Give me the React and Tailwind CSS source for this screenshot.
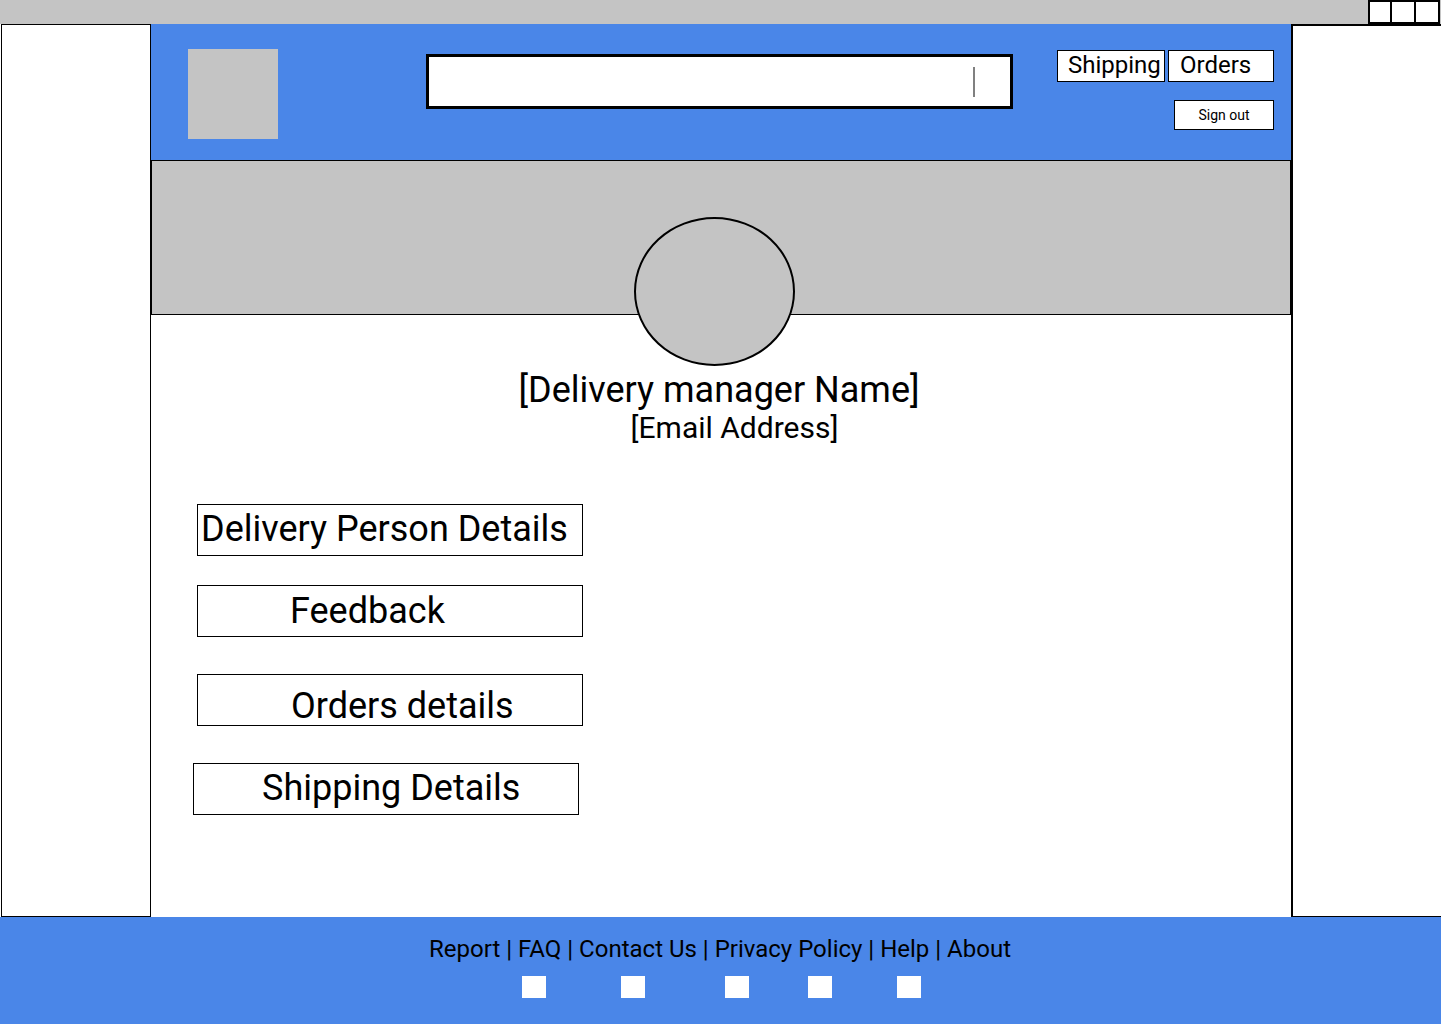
import React from "react";

export default function App() {
  return (
    <div className="w-[1441px] h-[1024px] flex flex-col bg-white text-black overflow-hidden font-['Roboto',sans-serif]">
      {/* top bar */}
      <div className="h-[24px] bg-[#c4c4c4] flex justify-end pr-[1px] shrink-0">
        <div className="w-[24px] h-[24px] bg-white border-2 border-black" />
        <div className="w-[24px] h-[24px] bg-white border-2 border-l-0 border-black" />
        <div className="w-[24px] h-[24px] bg-white border-2 border-l-0 border-black" />
      </div>

      {/* middle */}
      <div className="h-[893px] flex shrink-0">
        <div className="ml-[1px] w-[150px] h-full bg-white border border-black" />

        <div className="relative w-[1140px] h-full flex flex-col">
          {/* header */}
          <div className="h-[136px] bg-[#4a86e8] flex items-start shrink-0">
            <div className="ml-[37px] mt-[25px] w-[90px] h-[90px] bg-[#c4c4c4]" />
            <div className="ml-[148px] mt-[30px] w-[587px] h-[55px] bg-white border-[3px] border-black flex items-center justify-end pr-[35px]">
              <div className="w-[2px] h-[30px] bg-[#808080]" />
            </div>
            <div className="ml-[44px] mt-[26px] flex flex-col items-end">
              <div className="flex gap-[3px]">
                <div className="w-[108px] h-[32px] bg-white border border-black pl-[10px] text-[24px] leading-[28px] whitespace-nowrap">
                  Shipping
                </div>
                <div className="w-[106px] h-[32px] bg-white border border-black pl-[11px] text-[24px] leading-[28px] whitespace-nowrap">
                  Orders
                </div>
              </div>
              <div className="mt-[18px] w-[100px] h-[30px] bg-white border border-black flex items-center justify-center text-[14px] leading-none">
                Sign out
              </div>
            </div>
          </div>

          {/* banner */}
          <div className="h-[155px] bg-[#c4c4c4] border border-black shrink-0" />

          {/* content */}
          <div className="flex-1 flex flex-col bg-white">
            <div className="mt-[57px] w-full text-center pr-[4px] text-[36px] leading-[36px] whitespace-nowrap">
              [Delivery manager Name]
            </div>
            <div className="mt-[5px] w-full text-center pl-[27px] text-[30px] leading-[30px] whitespace-nowrap">
              [Email Address]
            </div>

            <div className="mt-[61px] flex flex-col items-start">
              <div className="ml-[46px] w-[386px] h-[52px] border border-black pl-[3px] pt-[3px] text-[36px] leading-[42px] whitespace-nowrap">
                Delivery Person Details
              </div>
              <div className="ml-[46px] mt-[29px] w-[386px] h-[52px] border border-black pl-[92px] pt-[4px] text-[36px] leading-[42px] whitespace-nowrap">
                Feedback
              </div>
              <div className="ml-[46px] mt-[37px] w-[386px] h-[52px] border border-black pl-[93px] pt-[10px] text-[36px] leading-[42px] whitespace-nowrap">
                Orders details
              </div>
              <div className="ml-[42px] mt-[37px] w-[386px] h-[52px] border border-black pl-[68px] pt-[3px] text-[36px] leading-[42px] whitespace-nowrap">
                Shipping Details
              </div>
            </div>
          </div>

          {/* avatar overlay */}
          <div className="absolute left-[483px] top-[193px] w-[161px] h-[149px] rounded-[50%] bg-[#c4c4c4] border-2 border-black" />
        </div>

        <div className="flex-1 h-full bg-white border-l-2 border-t-2 border-b border-black" />
      </div>

      {/* footer */}
      <div className="flex-1 bg-[#4a86e8] flex flex-col items-center">
        <div className="mt-[18px] text-[24px] leading-[28px] whitespace-nowrap pr-[1px]">
          Report | FAQ | Contact Us | Privacy Policy | Help | About
        </div>
        <div className="mt-[13px] flex pl-[2px]">
          <div className="w-[24px] h-[22px] bg-white" />
          <div className="ml-[75px] w-[24px] h-[22px] bg-white" />
          <div className="ml-[80px] w-[24px] h-[22px] bg-white" />
          <div className="ml-[59px] w-[24px] h-[22px] bg-white" />
          <div className="ml-[65px] w-[24px] h-[22px] bg-white" />
        </div>
      </div>
    </div>
  );
}
